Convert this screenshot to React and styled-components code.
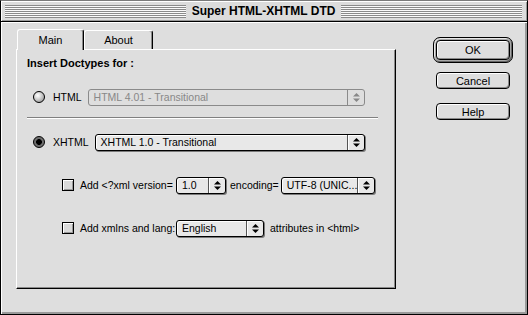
import React from "react";
import styled, { createGlobalStyle } from "styled-components";

const GlobalStyle = createGlobalStyle`
  html, body {
    margin: 0;
    padding: 0;
    background: #dedede;
  }
  body {
    font-family: "Liberation Sans", Arial, sans-serif;
    font-size: 10.5px;
    color: #000;
  }
  * {
    box-sizing: border-box;
  }
`;

const Window = styled.div`
  width: 528px;
  height: 315px;
  display: flex;
  flex-direction: column;
  border: 1px solid #000;
  border-top-color: #7a7a7a;
  background: #dedede;
`;

const TitleBar = styled.div`
  flex-shrink: 0;
  height: 21px;
  display: flex;
  align-items: center;
  gap: 4px;
  padding: 0 5px 0 4px;
  border-bottom: 1px solid #000;
  background: #dcdcdc;
  box-shadow: inset 1px 1px 0 #fff, inset -1px -1px 0 #999;
`;

const Stripes = styled.div`
  flex: 1;
  height: 13px;
  background: repeating-linear-gradient(
    to bottom,
    #8a8a8a 0 1px,
    #fafafa 1px 2px
  );
`;

const Title = styled.div`
  font-size: 12px;
  font-weight: bold;
  padding: 0 2px;
  white-space: nowrap;
`;

const Body = styled.div`
  flex: 1;
  display: flex;
  padding: 7px 0 0 15px;
  box-shadow: inset 1px 1px 0 #fff, inset -2px -2px 0 #9a9a9a;
`;

const TabArea = styled.div`
  width: 380px;
  display: flex;
  flex-direction: column;
`;

const TabRow = styled.div`
  height: 20px;
  display: flex;
  align-items: flex-end;
  padding-left: 1px;
`;

const Tab = styled.div`
  position: relative;
  z-index: ${(p) => (p.$active ? 2 : 1)};
  width: ${(p) => p.$width}px;
  height: ${(p) => (p.$active ? 21 : 19)}px;
  margin-bottom: ${(p) => (p.$active ? -1 : 0)}px;
  display: flex;
  align-items: center;
  justify-content: center;
  padding-bottom: ${(p) => (p.$active ? 1 : 0)}px;
  background: #dedede;
  border-top: 1px solid #fff;
  border-left: 1px solid #fff;
  border-right: 1px solid #000;
  border-radius: 3px 3px 0 0;
  box-shadow: inset -1px 0 0 #8a8a8a;
  font-size: 11px;
`;

const Pane = styled.div`
  height: 240px;
  display: flex;
  flex-direction: column;
  padding: 6px 17px 0 10px;
  border-top: 1px solid #fff;
  border-left: 1px solid #fff;
  border-right: 1px solid #000;
  border-bottom: 1px solid #000;
  box-shadow: inset -1px -1px 0 #8a8a8a;
`;

const Heading = styled.div`
  height: 14px;
  line-height: 14px;
  font-size: 11px;
  font-weight: bold;
`;

const Row = styled.div`
  display: flex;
  align-items: center;
  height: 18px;
  margin-top: ${(p) => p.$top}px;
  padding-left: ${(p) => p.$indent || 0}px;
`;

const Separator = styled.div`
  height: 2px;
  margin-top: 11px;
  border-top: 1px solid #808080;
  border-bottom: 1px solid #fff;
`;

const Radio = styled.span`
  flex-shrink: 0;
  width: 12px;
  height: 12px;
  margin-left: 6px;
  border-radius: 50%;
  border: 1px solid #000;
  background: ${(p) =>
    p.$checked
      ? "radial-gradient(circle at 50% 50%, #000 0 2.6px, #6e6e6e 3.2px 100%)"
      : "radial-gradient(circle at 38% 35%, #fff 0, #e4e4e4 25%, #9a9a9a 85%, #777 100%)"};
`;

const Label = styled.span`
  flex-shrink: 0;
  white-space: nowrap;
  margin-left: ${(p) => p.$ml || 0}px;
  margin-right: ${(p) => p.$mr || 0}px;
  width: ${(p) => (p.$width ? `${p.$width}px` : "auto")};
  color: ${(p) => (p.$disabled ? "#888" : "#000")};
`;

const Checkbox = styled.span`
  flex-shrink: 0;
  width: 12px;
  height: 12px;
  border: 1px solid #000;
  background: #dadada;
  box-shadow: inset 1px 1px 0 #fff, inset -1px -1px 0 #9a9a9a;
`;

const Popup = styled.div`
  display: flex;
  align-items: stretch;
  height: 17px;
  width: ${(p) => (p.$width ? `${p.$width}px` : "auto")};
  flex: ${(p) => (p.$width ? "0 0 auto" : "1")};
  margin-right: ${(p) => p.$mr || 0}px;
  border: 1px solid ${(p) => (p.$disabled ? "#8a8a8a" : "#000")};
  border-radius: 3px;
  background: ${(p) => (p.$disabled ? "#dedede" : "#e8e8e8")};
  color: ${(p) => (p.$disabled ? "#888" : "#000")};
  box-shadow: ${(p) =>
    p.$disabled
      ? "none"
      : "1px 1px 0 #7a7a7a, inset 1px 1px 0 #fff"};
`;

const PopupValue = styled.span`
  flex: 1;
  display: flex;
  align-items: center;
  padding-left: 5px;
  white-space: nowrap;
`;

const PopupArrow = styled.span`
  width: 17px;
  display: flex;
  align-items: center;
  justify-content: center;
  border-left: 1px solid ${(p) => (p.$disabled ? "#8a8a8a" : "#555")};
  box-shadow: ${(p) => (p.$disabled ? "none" : "inset 1px 0 0 #fff")};
`;

const ButtonColumn = styled.div`
  width: 80px;
  margin-left: 37px;
  padding-top: 8px;
  display: flex;
  flex-direction: column;
  align-items: center;
`;

const DefaultRing = styled.div`
  width: 80px;
  height: 26px;
  padding: 2px;
  border: 1px solid #000;
  border-radius: 7px;
  background: #a8a8a8;
  box-shadow: inset 1px 1px 0 #e8e8e8, inset -1px -1px 0 #666;
  display: flex;
`;

const Button = styled.div`
  width: ${(p) => (p.$fill ? "100%" : "74px")};
  height: ${(p) => (p.$fill ? "100%" : "17px")};
  margin-top: ${(p) => p.$top || 0}px;
  display: flex;
  align-items: center;
  justify-content: center;
  border: 1px solid #000;
  border-radius: 4px;
  background: #dedede;
  box-shadow: inset 1px 1px 0 #fff, inset -1px -1px 0 #8a8a8a;
  font-size: 11px;
`;

function Arrows({ color }) {
  return (
    <svg width="7" height="11" viewBox="0 0 7 11">
      <path d="M0 4.5 L3.5 1 L7 4.5 Z" fill={color} />
      <path d="M0 6.5 L3.5 10 L7 6.5 Z" fill={color} />
    </svg>
  );
}

function Select({ value, width, disabled, mr }) {
  return (
    <Popup $width={width} $disabled={disabled} $mr={mr}>
      <PopupValue>{value}</PopupValue>
      <PopupArrow $disabled={disabled}>
        <Arrows color={disabled ? "#888" : "#000"} />
      </PopupArrow>
    </Popup>
  );
}

export default function App() {
  return (
    <>
      <GlobalStyle />
      <Window>
        <TitleBar>
          <Stripes />
          <Title>Super HTML-XHTML DTD</Title>
          <Stripes />
        </TitleBar>
        <Body>
          <TabArea>
            <TabRow>
              <Tab $active $width={67}>Main</Tab>
              <Tab $width={69}>About</Tab>
            </TabRow>
            <Pane>
              <Heading>Insert Doctypes for :</Heading>
              <Row $top={18}>
                <Radio />
                <Label $ml={8} $mr={6}>HTML</Label>
                <Select value="HTML 4.01 - Transitional" disabled mr={13} />
              </Row>
              <Separator />
              <Row $top={14}>
                <Radio $checked />
                <Label $ml={8} $mr={6}>XHTML</Label>
                <Select value="XHTML 1.0 - Transitional" mr={13} />
              </Row>
              <Row $top={25} $indent={35}>
                <Checkbox />
                <Label $ml={6} $width={96}>Add &lt;?xml version=</Label>
                <Select value="1.0" width={50} />
                <Label $ml={4} $mr={2}>encoding=</Label>
                <Select value="UTF-8 (UNIC..." width={94} />
              </Row>
              <Row $top={25} $indent={35}>
                <Checkbox />
                <Label $ml={6} $width={96}>Add xmlns and lang:</Label>
                <Select value="English" width={88} />
                <Label $ml={6}>attributes in &lt;html&gt;</Label>
              </Row>
            </Pane>
          </TabArea>
          <ButtonColumn>
            <DefaultRing>
              <Button $fill>OK</Button>
            </DefaultRing>
            <Button $top={9}>Cancel</Button>
            <Button $top={14}>Help</Button>
          </ButtonColumn>
        </Body>
      </Window>
    </>
  );
}
